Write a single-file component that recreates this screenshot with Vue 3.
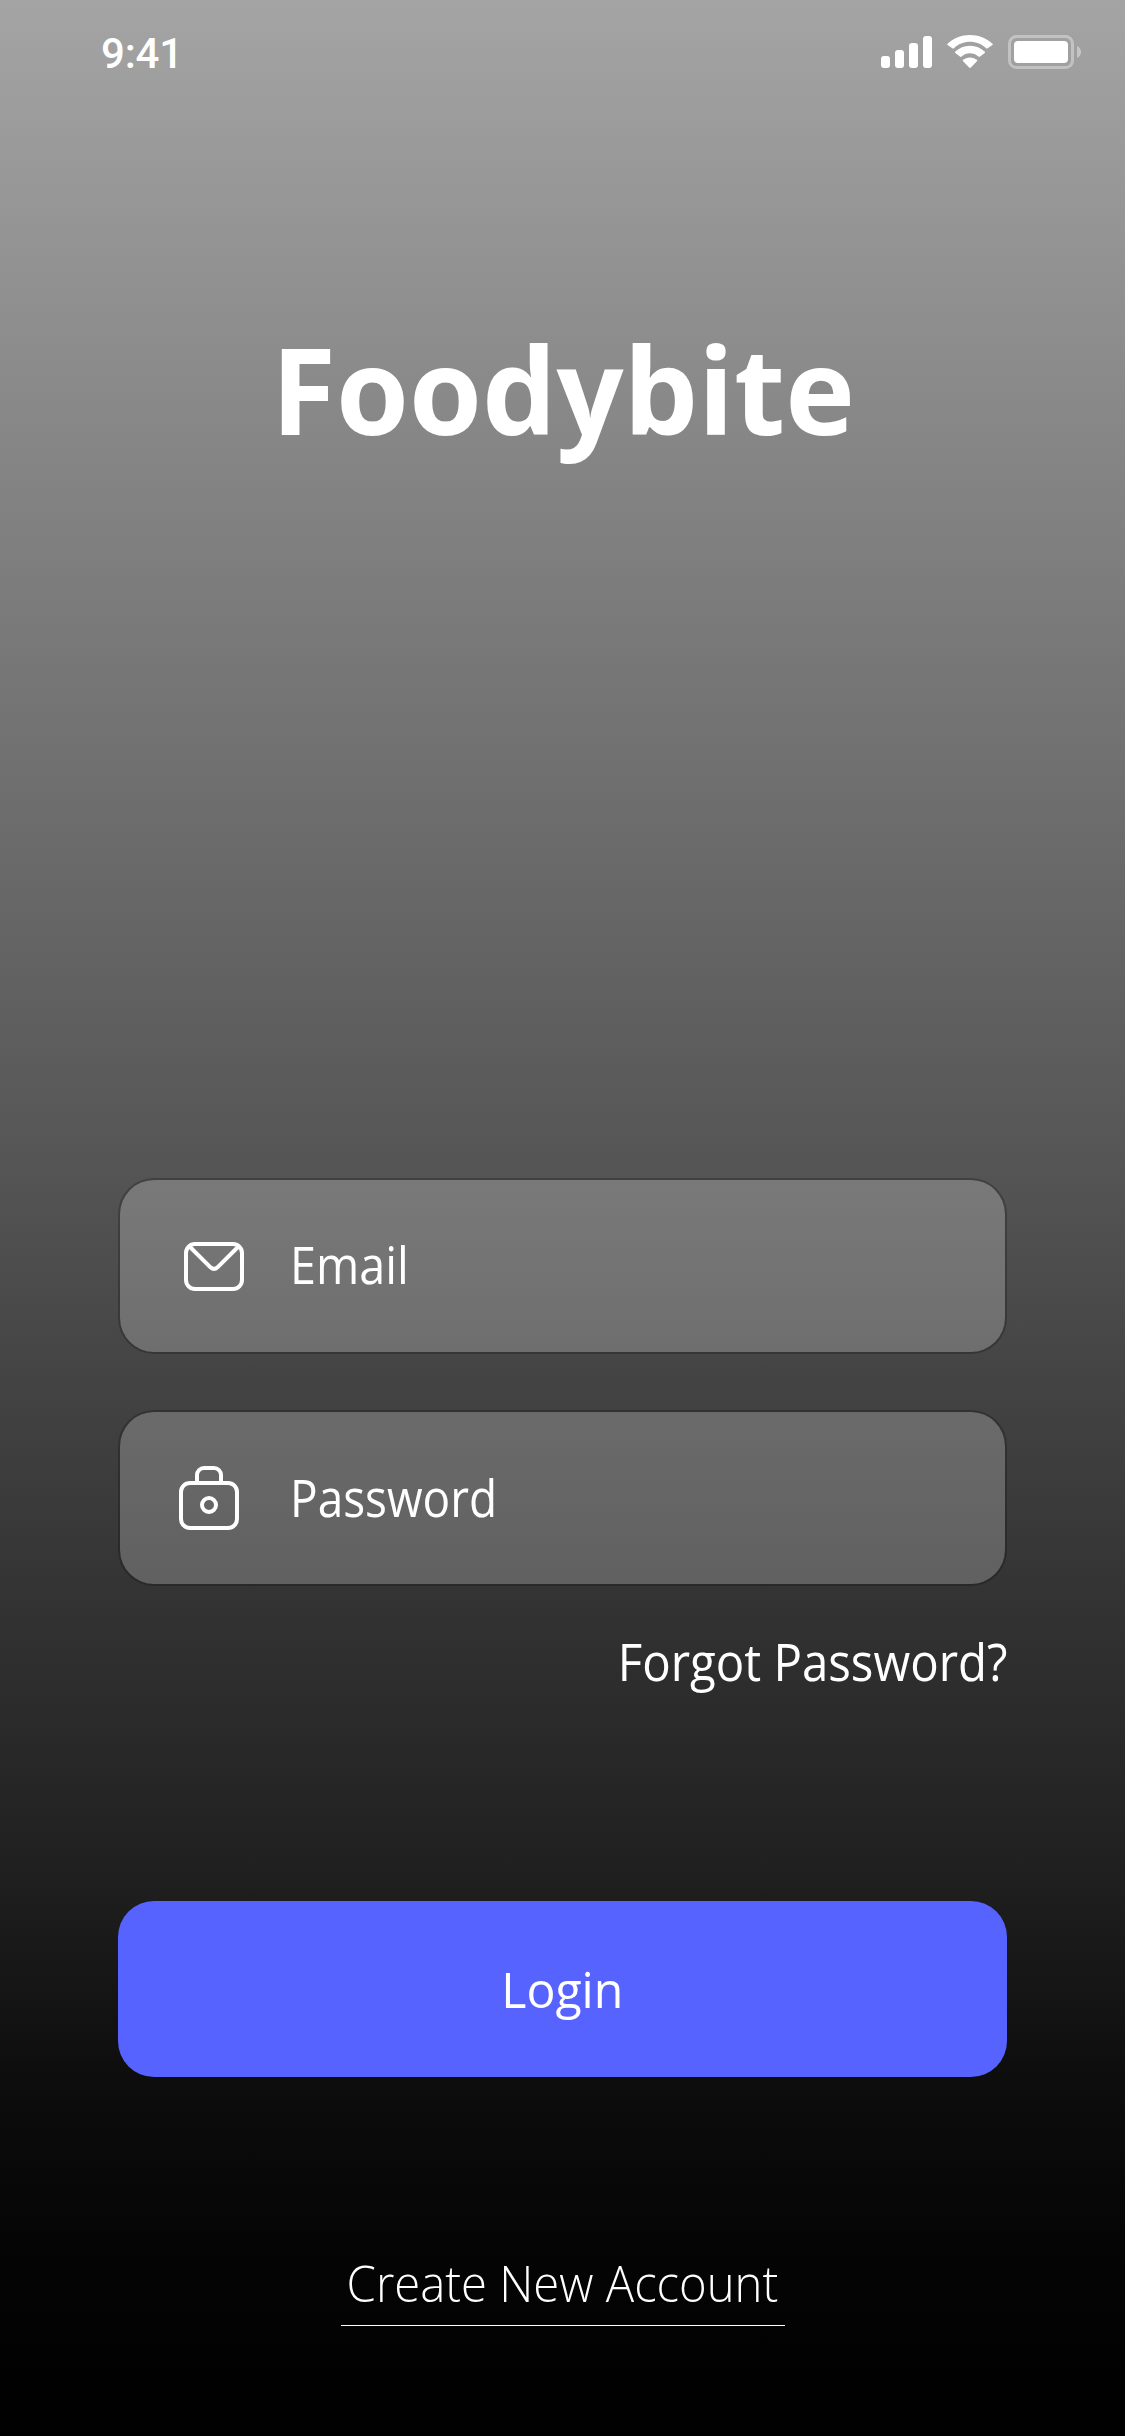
<script setup>
const bars = [
  { x: 0, y: 20, h: 12 },
  { x: 14, y: 14, h: 18 },
  { x: 28, y: 7, h: 25 },
  { x: 42, y: 0, h: 32 },
]
</script>

<template>
  <main class="screen">
    <header class="status">
      <span class="clock">9:41</span>
      <div class="indicators">
        <svg class="signal" width="51" height="32" viewBox="0 0 51 32" fill="#fff">
          <rect v-for="b in bars" :key="b.x" :x="b.x" :y="b.y" width="9" :height="b.h" rx="3" />
        </svg>
        <svg class="wifi" width="46" height="33" viewBox="0 0 46 33" fill="#fff">
          <path d="M23 6.8c6.2 0 11.8 2.4 16.1 6.4.5.5 1.1.5 1.6 0l4.700-3.100c.6-.4.5-.9 0-1.400C39.500 3.200 31.600 0 23 0S6.500 3.200.6 8.700c-.5.5-.6 1 0 1.400l4.700 3.100c.5.5 1.100.5 1.600 0C11.200 9.200 16.800 6.800 23 6.800z" />
          <path d="M23 18.200c3.200 0 6.200 1.200 8.500 3.300.5.5 1.100.5 1.600 0l4.600-3.500c.5-.5.5-1 0-1.500-3.900-3.600-9-5.800-14.700-5.800S12.200 12.900 8.300 16.500c-.5.5-.5 1 0 1.500l4.600 3.500c.5.5 1.100.5 1.600 0 2.300-2.100 5.300-3.300 8.500-3.300z" />
          <path d="M29.900 26.300c.5-.5.5-1 0-1.500-1.800-1.500-4.200-2.400-6.900-2.400s-5.100.9-6.900 2.400c-.5.5-.5 1 0 1.500l6 6.200c.5.5 1.300.5 1.800 0z" />
        </svg>
        <svg class="battery" width="73" height="34" viewBox="0 0 73 34">
          <rect x="1.500" y="1.500" width="63" height="31" rx="7" fill="none" stroke="#fff" stroke-opacity=".36" stroke-width="3" />
          <rect x="6" y="6" width="54" height="22" rx="4" fill="#fff" />
          <path d="M69 11c2.600 1.200 4 3.500 4 6s-1.400 4.800-4 6z" fill="#fff" fill-opacity=".4" />
        </svg>
      </div>
    </header>

    <h1 class="brand"><span>Foodybite</span></h1>

    <form class="login" @submit.prevent>
      <label class="field">
        <svg class="mail" width="60" height="49" viewBox="0 0 60 49" fill="none" stroke="#fff" stroke-width="4">
          <rect x="2" y="2" width="56" height="45" rx="9" />
          <path d="M5 4l21.500 21.300q3.500 3.200 7 0L55 4" />
        </svg>
        <span class="email">Email</span>
      </label>
      <label class="field">
        <svg class="lock" width="60" height="64" viewBox="0 0 60 64" fill="none" stroke="#fff" stroke-width="4">
          <rect x="2" y="17" width="56" height="45" rx="9" />
          <path d="M18 17V9a7 7 0 0 1 7-7h10a7 7 0 0 1 7 7v8" />
          <circle cx="30" cy="39" r="7" />
        </svg>
        <span class="password">Password</span>
      </label>
      <a class="forgot">Forgot Password?</a>
      <button class="submit"><span>Login</span></button>
    </form>

    <a class="create"><span>Create New Account</span></a>
  </main>
</template>

<style>
body {
  margin: 0;
  background: #000;
}
</style>

<style scoped>
.screen {
  box-sizing: border-box;
  width: 1125px;
  height: 2436px;
  display: flex;
  flex-direction: column;
  color: #fff;
  font-family: "Open Sans", "Noto Sans", sans-serif;
  background: linear-gradient(180deg, #a4a4a4 0, #868686 440px, #555 1165px, #424242 1400px, #333 1600px, #1f1f1f 1880px, #0d0d0d 2080px, #050505 2240px, #000 2436px);
}
.status {
  box-sizing: border-box;
  height: 104px;
  padding: 0 44px 0 101px;
  display: flex;
  align-items: center;
  justify-content: space-between;
}
.clock {
  font: 480 42px/50px Roboto, sans-serif;
  letter-spacing: -0.2px;
  margin-top: 3px;
}
.indicators {
  display: flex;
  align-items: center;
}
.wifi {
  margin: -1px 15px 0;
}
.brand {
  margin: 205px 0 0;
  height: 160px;
  padding-left: 2px;
  font-size: 120px;
  line-height: 160px;
  font-weight: 700;
  text-align: center;
}
.brand span,
.submit span,
.create span {
  display: inline-block;
  transform: scaleX(0.982);
}
.login {
  width: 889px;
  margin: 709px auto 0;
  display: flex;
  flex-direction: column;
}
.field {
  box-sizing: border-box;
  height: 176px;
  margin-bottom: 56px;
  padding-left: 64px;
  display: flex;
  align-items: center;
  border: 2px solid rgba(0, 0, 0, 0.22);
  border-radius: 36px;
  background: rgba(255, 255, 255, 0.22);
  background-clip: padding-box;
  font-size: 50.500px;
  line-height: 68px;
}
.lock {
  margin: 0 5px 0 -5px;
}
.field span {
  margin-left: 46px;
  transform-origin: left;
}
.email {
  margin-top: -2px;
  transform: scaleX(0.925);
}
.password {
  transform: scaleX(0.91);
}
.forgot {
  align-self: flex-end;
  margin-top: -14px;
  height: 68px;
  font-size: 50.500px;
  line-height: 68px;
  transform: scaleX(0.938);
  transform-origin: right;
}
.submit {
  margin-top: 205px;
  height: 176px;
  padding: 0;
  border: 0;
  border-radius: 36px;
  background: #5663ff;
  color: #fff;
  font: 400 50px/68px "Open Sans", "Noto Sans", sans-serif;
}
.submit span {
  transform: scaleX(0.965);
}
.create {
  align-self: center;
  box-sizing: border-box;
  width: 444px;
  height: 77px;
  margin-top: 172px;
  border-bottom: 1px solid #fff;
  display: flex;
  justify-content: center;
  white-space: nowrap;
  font-size: 50px;
  line-height: 68px;
  font-weight: 300;
}
.create span {
  transform: scaleX(0.945);
}
</style>
